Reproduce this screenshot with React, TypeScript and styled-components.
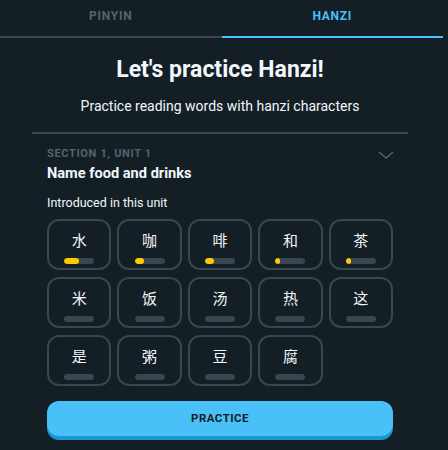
import React from 'react';
import styled, { createGlobalStyle } from 'styled-components';

const GlobalStyle = createGlobalStyle`
  html, body {
    margin: 0;
    padding: 0;
    background: #131f24;
  }
  body {
    font-family: Roboto, "Noto Sans CJK SC", sans-serif;
    color: #f1f7fb;
  }
`;

interface HanziItem {
  char: string;
  progress: number;
}

const UNIT_CHARS: HanziItem[] = [
  { char: '水', progress: 0.5 },
  { char: '咖', progress: 0.3 },
  { char: '啡', progress: 0.3 },
  { char: '和', progress: 0.15 },
  { char: '茶', progress: 0.15 },
  { char: '米', progress: 0 },
  { char: '饭', progress: 0 },
  { char: '汤', progress: 0 },
  { char: '热', progress: 0 },
  { char: '这', progress: 0 },
  { char: '是', progress: 0 },
  { char: '粥', progress: 0 },
  { char: '豆', progress: 0 },
  { char: '腐', progress: 0 },
];

function Chevron() {
  return (
    <svg width='16' height='10' viewBox='0 0 16 10' fill='none'>
      <path d='M1.5 2.5 L8 8 L14.5 2.5' stroke='#52656d' strokeWidth='1.6' strokeLinecap='round' strokeLinejoin='round' />
    </svg>
  );
}

export default function App() {
  return (
    <Page>
      <GlobalStyle />
      <Tabs>
        <Tab>Pinyin</Tab>
        <Tab active>Hanzi</Tab>
      </Tabs>
      <Content>
        <Title>Let's practice Hanzi!</Title>
        <Subtitle>Practice reading words with hanzi characters</Subtitle>
        <Divider />
        <Unit>
          <UnitHeader>
            <div>
              <SectionLabel>Section 1, Unit 1</SectionLabel>
              <UnitName>Name food and drinks</UnitName>
            </div>
            <Chevron />
          </UnitHeader>
          <Intro>Introduced in this unit</Intro>
          <CharGrid>
            {UNIT_CHARS.map((item) => (
              <CharCard key={item.char}>
                <Glyph>{item.char}</Glyph>
                <Bar>
                  {item.progress > 0 && <BarFill style={{ width: `${item.progress * 100}%` }} />}
                </Bar>
              </CharCard>
            ))}
          </CharGrid>
          <PracticeButton>Practice</PracticeButton>
        </Unit>
      </Content>
    </Page>
  );
}

const Page = styled.div`
  width: 443px;
  min-height: 450px;
  background: #131f24;
`;

const Tabs = styled.div`
  display: flex;
  height: 38px;
`;

const Tab = styled.div<{ active?: boolean }>`
  flex: 1;
  display: flex;
  justify-content: center;
  padding-top: 9px;
  box-sizing: border-box;
  font-size: 12px;
  font-weight: 700;
  letter-spacing: 0.06em;
  text-transform: uppercase;
  color: ${(p) => (p.active ? '#49c0f8' : '#52656d')};
  border-bottom: 2px solid ${(p) => (p.active ? '#49c0f8' : '#37464f')};
`;

const Content = styled.div`
  display: flex;
  flex-direction: column;
  align-items: center;
  width: 440px;
`;

const Title = styled.h1`
  margin: 18px 0 0;
  font-size: 23px;
  line-height: 28px;
  font-weight: 700;
  color: #f1f7fb;
`;

const Subtitle = styled.p`
  margin: 12px 0 0;
  font-size: 14px;
  line-height: 20px;
  color: #f1f7fb;
`;

const Divider = styled.div`
  width: 376px;
  height: 2px;
  margin-top: 16px;
  background: #37464f;
`;

const Unit = styled.div`
  width: 346px;
  display: flex;
  flex-direction: column;
  padding-top: 13px;
`;

const UnitHeader = styled.div`
  display: flex;
  justify-content: space-between;
  align-items: flex-start;
  svg {
    margin-top: 3px;
    margin-right: -1px;
  }
`;

const SectionLabel = styled.div`
  font-size: 11px;
  line-height: 14px;
  font-weight: 700;
  letter-spacing: 0.06em;
  text-transform: uppercase;
  color: #52656d;
`;

const UnitName = styled.div`
  margin-top: 3px;
  font-size: 14.6px;
  line-height: 18px;
  font-weight: 700;
  color: #f1f7fb;
`;

const Intro = styled.div`
  margin-top: 13px;
  font-size: 12.5px;
  line-height: 16px;
  color: #f1f7fb;
`;

const CharGrid = styled.div`
  margin-top: 8px;
  display: grid;
  grid-template-columns: repeat(5, 1fr);
  column-gap: 6px;
  row-gap: 7px;
`;

const CharCard = styled.div`
  height: 51px;
  box-sizing: border-box;
  border: 2px solid #37464f;
  border-radius: 12px;
  display: flex;
  flex-direction: column;
  align-items: center;
  padding-top: 9px;
`;

const Glyph = styled.div`
  font-family: "Noto Sans CJK SC", sans-serif;
  font-size: 15px;
  line-height: 20px;
  color: #f1f7fb;
`;

const Bar = styled.div`
  margin-top: 8px;
  width: 30px;
  height: 6px;
  border-radius: 3px;
  background: #37464f;
  overflow: hidden;
`;

const BarFill = styled.div`
  height: 100%;
  min-width: 5px;
  border-radius: 3px;
  background: #ffc800;
`;

const PracticeButton = styled.button`
  margin-top: 15px;
  height: 35px;
  border: none;
  border-radius: 12px;
  background: #49c0f8;
  box-shadow: 0 4px 0 #1899d6;
  margin-bottom: 4px;
  font-family: Roboto, sans-serif;
  font-size: 11.5px;
  font-weight: 700;
  letter-spacing: 0.04em;
  text-transform: uppercase;
  color: #131f24;
  padding: 0 0 2px;
`;
